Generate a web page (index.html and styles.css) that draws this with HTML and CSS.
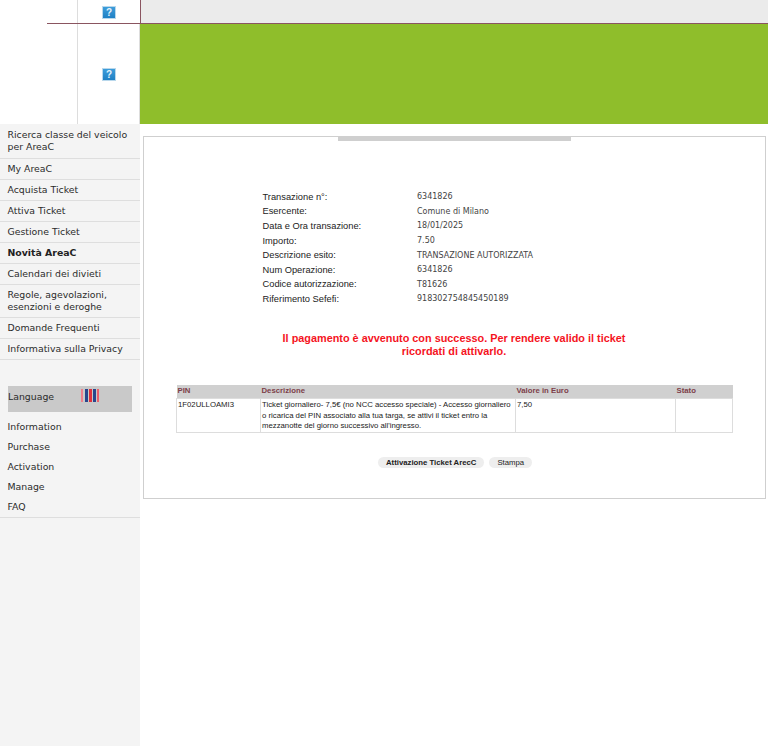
FILE: index.html
```html
<!DOCTYPE html>
<html lang="it">
<head>
<meta charset="utf-8">
<title>AreaC</title>
<link rel="stylesheet" href="styles.css">
</head>
<body>
<header class="top">
  <div class="top-row first">
    <div class="logo-space"><div class="rule"></div></div>
    <div class="icon-cell"><span class="missing">?</span></div>
    <div class="strip"></div>
  </div>
  <div class="top-row second">
    <div class="logo-space"></div>
    <div class="icon-cell"><span class="missing">?</span></div>
    <div class="banner"></div>
  </div>
</header>
<div class="layout">
  <nav class="side">
    <ul class="menu">
      <li class="tall">Ricerca classe del veicolo per AreaC</li>
      <li>My AreaC</li>
      <li>Acquista Ticket</li>
      <li>Attiva Ticket</li>
      <li>Gestione Ticket</li>
      <li class="strong">Novità AreaC</li>
      <li>Calendari dei divieti</li>
      <li class="tall">Regole, agevolazioni, esenzioni e deroghe</li>
      <li>Domande Frequenti</li>
      <li>Informativa sulla Privacy</li>
    </ul>
    <div class="lang">
      <span class="lang-label">Language</span>
      <svg class="flag" width="19" height="13" viewBox="0 0 19 13" aria-hidden="true">
        <rect x="0" width="2" height="13" fill="#f0808c"/>
        <rect x="4" width="3" height="13" fill="#28468c"/>
        <rect x="8" width="3" height="13" fill="#e0303c"/>
        <rect x="12" width="3" height="13" fill="#28468c"/>
        <rect x="16" width="2" height="13" fill="#e8606c"/>
      </svg>
    </div>
    <ul class="english">
      <li>Information</li>
      <li>Purchase</li>
      <li>Activation</li>
      <li>Manage</li>
      <li>FAQ</li>
    </ul>
  </nav>
  <main class="content">
    <section class="panel">
      <div class="tab-bar"></div>
      <dl class="details">
        <div class="line"><dt>Transazione n°:</dt><dd>6341826</dd></div>
        <div class="line"><dt>Esercente:</dt><dd>Comune di Milano</dd></div>
        <div class="line"><dt>Data e Ora transazione:</dt><dd>18/01/2025</dd></div>
        <div class="line"><dt>Importo:</dt><dd>7.50</dd></div>
        <div class="line"><dt>Descrizione esito:</dt><dd>TRANSAZIONE AUTORIZZATA</dd></div>
        <div class="line"><dt>Num Operazione:</dt><dd>6341826</dd></div>
        <div class="line"><dt>Codice autorizzazione:</dt><dd>T81626</dd></div>
        <div class="line"><dt>Riferimento Sefefi:</dt><dd>918302754845450189</dd></div>
      </dl>
      <p class="success">Il pagamento è avvenuto con successo. Per rendere valido il ticket ricordati di attivarlo.</p>
      <table class="tickets">
        <colgroup><col class="c1"><col class="c2"><col class="c3"><col class="c4"></colgroup>
        <thead>
          <tr><th>PIN</th><th>Descrizione</th><th>Valore in Euro</th><th>Stato</th></tr>
        </thead>
        <tbody>
          <tr>
            <td>1F02ULLOAMI3</td>
            <td>Ticket giornaliero- 7,5€ (no NCC accesso speciale) - Accesso giornaliero o ricarica del PIN associato alla tua targa, se attivi il ticket entro la mezzanotte del giorno successivo all'ingresso.</td>
            <td>7,50</td>
            <td></td>
          </tr>
        </tbody>
      </table>
      <div class="actions">
        <button class="btn primary" type="button">Attivazione Ticket ArecC</button>
        <button class="btn" type="button">Stampa</button>
      </div>
    </section>
  </main>
</div>
</body>
</html>
```
FILE: styles.css
```css
* { box-sizing: border-box; }
html, body { margin: 0; padding: 0; }
body {
  width: 768px;
  height: 746px;
  overflow: hidden;
  background: #fff;
  font-family: "DejaVu Sans", sans-serif;
  color: #333;
}
.top-row { display: flex; }
.top-row.first { height: 24px; }
.top-row.second { height: 100px; }
.logo-space { width: 77px; position: relative; }
.rule {
  position: absolute;
  left: 47px;
  top: 23px;
  width: 94px;
  height: 1px;
  background: #8a5560;
}
.icon-cell {
  width: 63px;
  border-left: 1px solid #ddd;
  border-right: 1px solid #ddd;
  display: flex;
  align-items: center;
  justify-content: center;
  padding-left: 1px;
}
.first .icon-cell { width: 64px; border-right: 1px solid #8a5560; padding-right: 1px; }
.missing {
  width: 14px;
  height: 13px;
  background: linear-gradient(#3d9ddb, #1f80c4);
  border: 1px solid #b9d8ec;
  color: #e4f3fc;
  font: bold 10px/11px "Liberation Sans", sans-serif;
  text-align: center;
}
.strip { flex: 1; background: #ebebeb; border-bottom: 1px solid #8a5560; }
.banner { flex: 1; background: #8fbe2b; }

.layout { display: flex; height: 622px; }
.side {
  width: 140px;
  background: #f4f4f4;
  font-size: 9.35px;
  line-height: 12px;
  color: #2b2b2b;
}
.menu, .english { list-style: none; margin: 0; padding: 0; }
.menu li {
  height: 21px;
  padding: 4px 7px 0 7.5px;
  border-bottom: 1px solid #dedede;
}
.menu li.tall { height: 33px; padding-top: 4px; }
.menu li.tall:first-child { height: 35px; padding-top: 5px; }
.menu li.strong { font-weight: bold; color: #222; }
.lang {
  margin: 26px 8px 0;
  height: 26px;
  background: #c9c9c9;
  display: flex;
  align-items: flex-start;
  padding-top: 5px;
}
.lang-label { width: 73px; }
.flag { margin-top: -2px; }
.english {
  padding: 4px 0 1px;
  border-bottom: 1px solid #dedede;
}
.english li { height: 20px; padding: 5px 8px 0 7.5px; }

.content { flex: 1; padding: 12px 2px 0 3px; }
.panel {
  height: 363px;
  border: 1px solid #cfcfcf;
  position: relative;
  padding-top: 53px;
  background: #fff;
}
.tab-bar {
  position: absolute;
  left: 194px;
  top: 0;
  width: 233px;
  height: 4px;
  background: #cfcfcf;
}
.details { margin: 0 0 0 118.5px; }
.line { display: flex; height: 14.6px; align-items: center; }
.line dt {
  width: 154.5px;
  font: 9.3px/13px "Liberation Sans", sans-serif;
  color: #222;
}
.line dd {
  margin: 0;
  font-size: 8px;
  line-height: 14px;
  color: #444;
}
.success {
  margin: 25px 0 0 130px;
  width: 360px;
  font: bold 10.87px/13px "Liberation Sans", sans-serif;
  color: #f5141e;
  text-align: center;
}
.tickets {
  margin: 27px 0 0 32px;
  width: 556px;
  table-layout: fixed;
  border-collapse: collapse;
  font: 7.75px/10.5px "Liberation Sans", sans-serif;
  color: #222;
}
.c1 { width: 84px; }
.c2 { width: 255px; }
.c3 { width: 160px; }
.c4 { width: 57px; }
.tickets th {
  height: 14px;
  padding: 0 1px;
  background: #d0d0d0;
  color: #7d3f4a;
  text-align: left;
  font-weight: bold;
}
.tickets td {
  height: 34px;
  padding: 1px 1px 0 1px;
  vertical-align: top;
  border: 1px solid #ddd;
}
.actions {
  display: flex;
  gap: 5px;
  margin: 24px 0 0 234px;
}
.btn {
  height: 11px;
  padding: 0 8px;
  border: 0;
  border-radius: 6px;
  background: #eee;
  color: #222;
  font: 7.75px/11px "Liberation Sans", sans-serif;
}
.btn.primary { font-weight: bold; padding: 0 8px; }
```
